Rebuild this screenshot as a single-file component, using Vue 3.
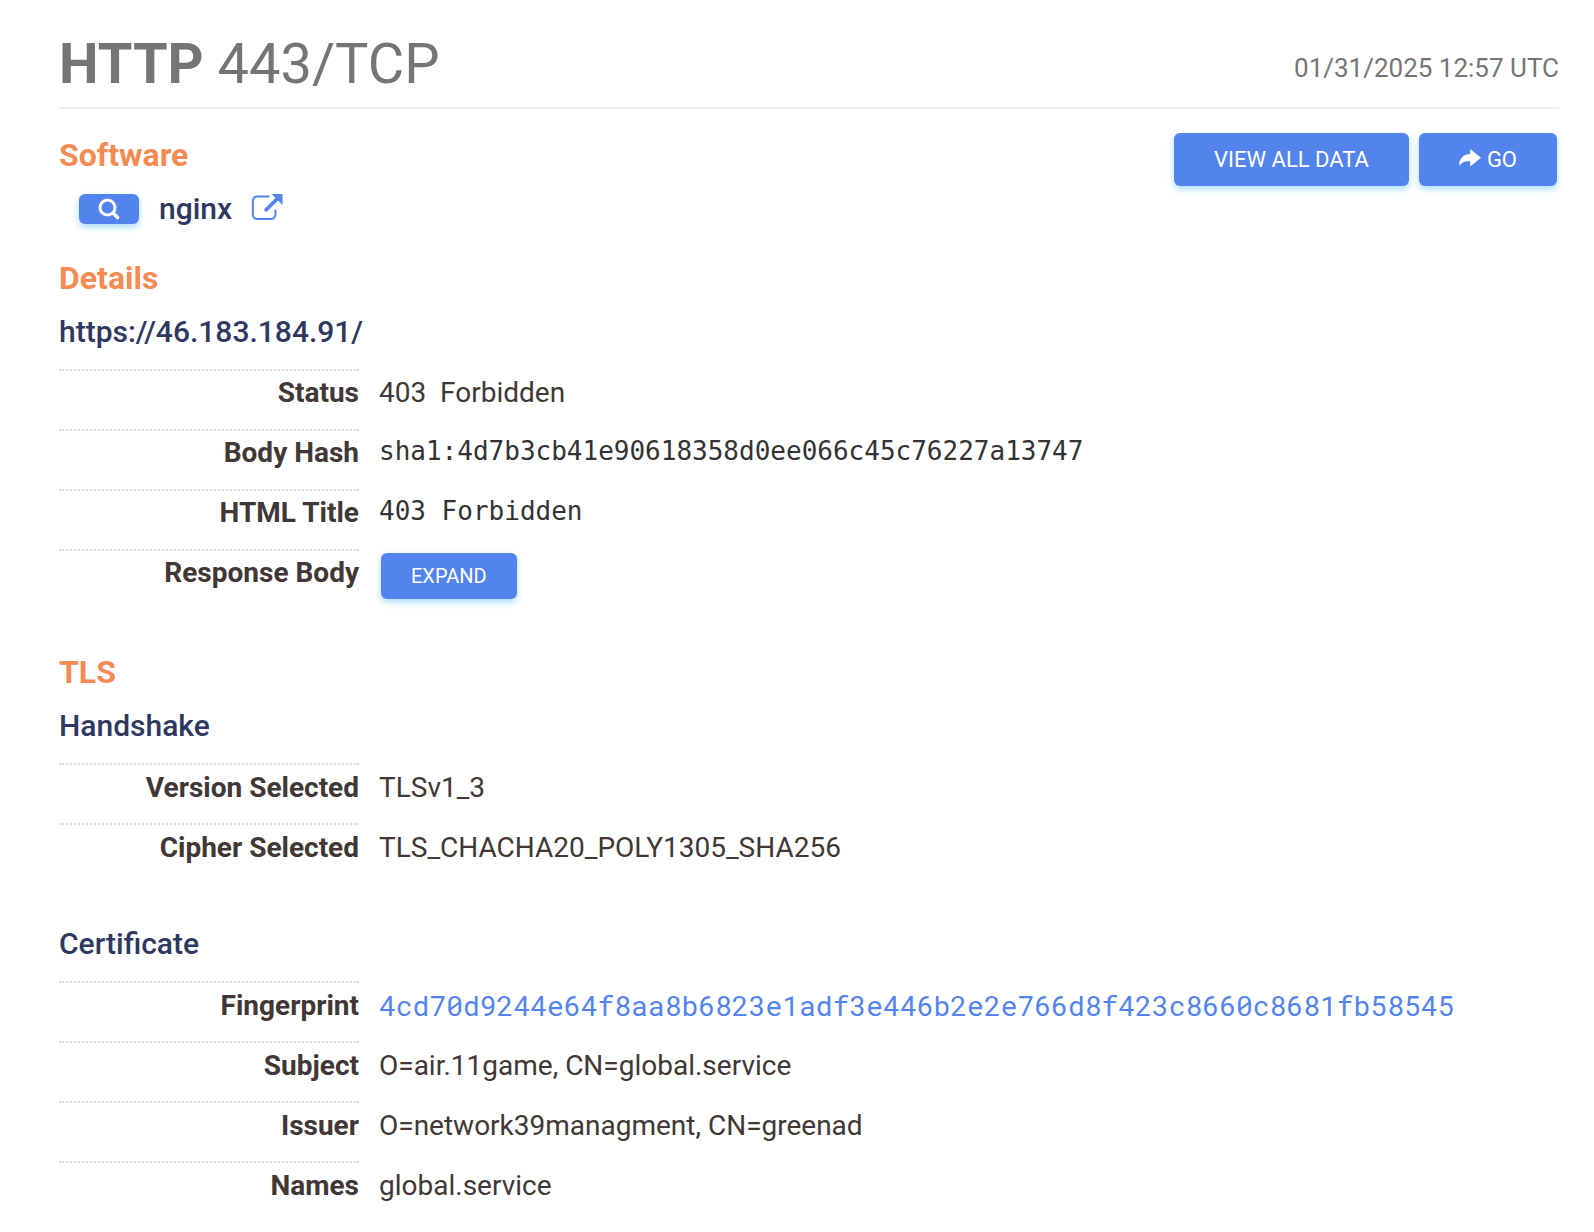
<script setup>
const details = [
  { label: 'Status', value: '403  Forbidden', kind: 'text' },
  { label: 'Body Hash', value: 'sha1:4d7b3cb41e90618358d0ee066c45c76227a13747', kind: 'code' },
  { label: 'HTML Title', value: '403 Forbidden', kind: 'code' },
  { label: 'Response Body', value: 'Expand', kind: 'button' },
]

const handshake = [
  { label: 'Version Selected', value: 'TLSv1_3' },
  { label: 'Cipher Selected', value: 'TLS_CHACHA20_POLY1305_SHA256' },
]

const certificate = [
  { label: 'Fingerprint', value: '4cd70d9244e64f8aa8b6823e1adf3e446b2e2e766d8f423c8660c8681fb58545', link: true },
  { label: 'Subject', value: 'O=air.11game, CN=global.service' },
  { label: 'Issuer', value: 'O=network39managment, CN=greenad' },
  { label: 'Names', value: 'global.service' },
]
</script>

<template>
  <main class="service">
    <header class="service-header">
      <h1><strong>HTTP</strong> 443/TCP</h1>
      <time datetime="2025-01-31T12:57Z">01/31/2025 12:57 UTC</time>
    </header>

    <div class="top-row">
      <section class="software">
        <h2>Software</h2>
        <div class="software-item">
          <button class="btn btn-search" type="button" aria-label="Search nginx">
            <svg width="22" height="22" viewBox="0 0 22 22" fill="none" stroke="currentColor" aria-hidden="true">
              <circle cx="9.5" cy="9.5" r="7.5" stroke-width="3" />
              <path d="M15 15 19.500 19.500" stroke-width="3.600" stroke-linecap="round" />
            </svg>
          </button>
          <span class="software-name">nginx</span>
          <a class="external" href="#" aria-label="Open nginx website">
            <svg width="32" height="28" viewBox="0 0 32 28" fill="none" stroke="currentColor" aria-hidden="true">
              <path d="M18.500 3.500H6A4.200 4.200 0 0 0 1.800 7.700v14.100A4.200 4.200 0 0 0 6 26h14.200a4.200 4.200 0 0 0 4.200-4.200V16.500" stroke-width="2" />
              <path d="M14 18 26.500 5.500" stroke-width="3.800" />
              <path d="M20.500 1H31.500V12Z" fill="currentColor" stroke="none" />
            </svg>
          </a>
        </div>
      </section>
      <div class="actions">
        <button class="btn btn-large" type="button">View all data</button>
        <button class="btn btn-large" type="button">
          <svg class="arrow" width="22" height="18" viewBox="0 0 22 18" aria-hidden="true">
            <path fill="currentColor" d="M11.200 0 22 8.800 11.200 17.500V12.300C6 12 2.800 13 .4 16.800-.4 10.500 4 5.200 11.200 5Z" />
          </svg>
          Go
        </button>
      </div>
    </div>

    <section class="details">
      <h2>Details</h2>
      <h3>https://46.183.184.91/</h3>
      <dl>
        <div v-for="row in details" :key="row.label" class="row">
          <dt>{{ row.label }}</dt>
          <dd>
            <button v-if="row.kind === 'button'" class="btn btn-small" type="button">{{ row.value }}</button>
            <code v-else-if="row.kind === 'code'">{{ row.value }}</code>
            <template v-else>{{ row.value }}</template>
          </dd>
        </div>
      </dl>
    </section>

    <section class="tls">
      <h2>TLS</h2>
      <h3>Handshake</h3>
      <dl>
        <div v-for="row in handshake" :key="row.label" class="row">
          <dt>{{ row.label }}</dt>
          <dd>{{ row.value }}</dd>
        </div>
      </dl>
      <h3 class="certificate">Certificate</h3>
      <dl>
        <div v-for="row in certificate" :key="row.label" class="row">
          <dt>{{ row.label }}</dt>
          <dd>
            <a v-if="row.link" class="fingerprint" href="#">{{ row.value }}</a>
            <template v-else>{{ row.value }}</template>
          </dd>
        </div>
      </dl>
    </section>
  </main>
</template>

<style>
body {
  margin: 0;
  background: #fff;
}
</style>

<style scoped>
.service {
  box-sizing: border-box;
  padding: 30px 35px 8px 59px;
  font-family: Roboto, "Liberation Sans", sans-serif;
  font-size: 28px;
  line-height: 40px;
  color: #403736;
}

h1, h2, h3, dl, dd {
  margin: 0;
}

.service-header {
  display: flex;
  justify-content: space-between;
  align-items: flex-end;
  padding-bottom: 9px;
  border-bottom: 2px solid #eee;
  color: #757575;
}

h1 {
  font-size: 56px;
  line-height: 68px;
  font-weight: 400;
}

time {
  padding-bottom: 14px;
  font-size: 26px;
  line-height: 32px;
}

h2 {
  margin-bottom: 14px;
  font-size: 32px;
  line-height: 40px;
  font-weight: 700;
  color: #f38b53;
}

h3 {
  margin-bottom: 17px;
  font-size: 30px;
  line-height: 40px;
  font-weight: 500;
  color: #2e3861;
}

.top-row {
  display: flex;
  justify-content: space-between;
  align-items: flex-start;
  padding: 24px 2px 0 0;
}

.software {
  padding-top: 2px;
}

.software-item {
  display: flex;
  align-items: center;
  padding-left: 20px;
}

.software-name {
  margin: 0 19px 0 20px;
  font-size: 30px;
  font-weight: 500;
  color: #2e3861;
}

.external {
  display: flex;
  padding-bottom: 4px;
  color: #5384ee;
}

.actions {
  display: flex;
  gap: 10px;
}

.btn {
  display: flex;
  align-items: center;
  justify-content: center;
  gap: 6px;
  border: 0;
  border-radius: 6px;
  background: #5384ee;
  box-shadow: 0 3px 7px rgba(3, 155, 229, 0.35);
  color: #fff;
  font-family: inherit;
  font-weight: 400;
  text-transform: uppercase;
  cursor: pointer;
}

.btn-large {
  height: 53px;
  padding: 0 40px;
  font-size: 22px;
}

.btn-small {
  height: 46px;
  margin-left: 2px;
  padding: 0 30px;
  font-size: 20px;
}

.btn-search {
  width: 60px;
  height: 30px;
  padding: 0;
}

.arrow {
  margin-bottom: 4px;
}

.details {
  padding-top: 29px;
}

.tls {
  padding-top: 43px;
}

.certificate {
  padding-top: 41px;
}

.row {
  display: grid;
  grid-template-columns: 20% minmax(0, 1fr);
  column-gap: 20px;
  height: 60px;
}

dt {
  box-sizing: border-box;
  padding-top: 2px;
  border-top: 2px dotted #dcdcdc;
  font-weight: 700;
  text-align: right;
}

dd {
  padding-top: 4px;
  white-space: pre-wrap;
}

.tls dt {
  padding-top: 3px;
}

.tls dd {
  padding-top: 5px;
}

code {
  display: block;
  font-family: "DejaVu Sans Mono", monospace;
  font-size: 26px;
  line-height: 36px;
  color: #333;
}

.fingerprint {
  font-family: "Roboto Mono", "DejaVu Sans Mono", monospace;
  color: #5384ee;
  text-decoration: none;
}
</style>
